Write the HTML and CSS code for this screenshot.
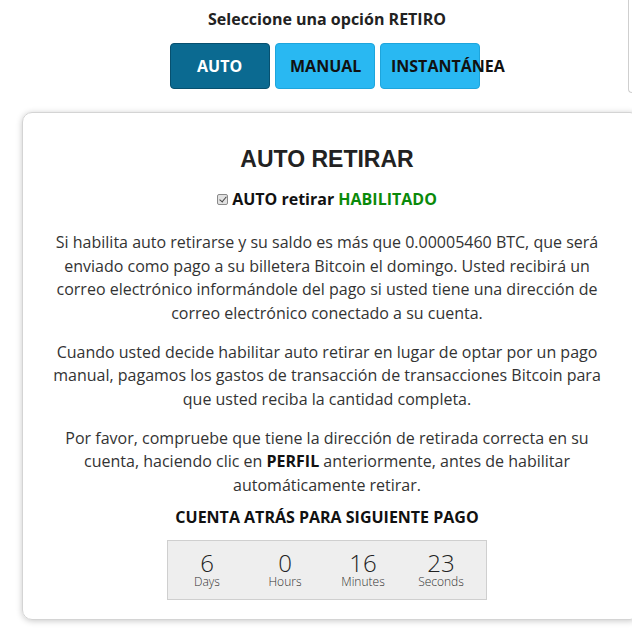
FILE: index.html
```html
<!DOCTYPE html>
<html lang="es">
<head>
<meta charset="utf-8">
<link rel="stylesheet" href="styles.css">
</head>
<body>
<div class="top">
  <div class="picker">
    <div class="picker-title">Seleccione una opción RETIRO</div>
    <div class="btns">
      <button class="btn btn-active">AUTO</button>
      <button class="btn">MANUAL</button>
      <button class="btn">INSTANTÁNEA</button>
    </div>
  </div>
  <div class="side"></div>
</div>
<div class="card">
  <h2 class="card-title">AUTO RETIRAR</h2>
  <div class="check-line">
    <input type="checkbox" class="chk" checked disabled>
    <span>AUTO retirar <span class="ok">HABILITADO</span></span>
  </div>
  <p class="txt">Si habilita auto retirarse y su saldo es más que 0.00005460 BTC, que será enviado como pago a su billetera Bitcoin el domingo. Usted recibirá un correo electrónico informándole del pago si usted tiene una dirección de correo electrónico conectado a su cuenta.</p>
  <p class="txt">Cuando usted decide habilitar auto retirar en lugar de optar por un pago manual, pagamos los gastos de transacción de transacciones Bitcoin para que usted reciba la cantidad completa.</p>
  <p class="txt">Por favor, compruebe que tiene la dirección de retirada correcta en su cuenta, haciendo clic en <b>PERFIL</b> anteriormente, antes de habilitar automáticamente retirar.</p>
  <div class="count-title">CUENTA ATRÁS PARA SIGUIENTE PAGO</div>
  <div class="count">
    <div class="cell"><span class="num">6</span><span class="lbl">Days</span></div>
    <div class="cell"><span class="num">0</span><span class="lbl">Hours</span></div>
    <div class="cell"><span class="num">16</span><span class="lbl">Minutes</span></div>
    <div class="cell"><span class="num">23</span><span class="lbl">Seconds</span></div>
  </div>
</div>
</body>
</html>
```
FILE: styles.css
```css
html, body {
  margin: 0;
  padding: 0;
  background: #fff;
  overflow: hidden;
}
body {
  font-family: "Open Sans", "Liberation Sans", sans-serif;
  color: #333;
  width: 632px;
  height: 636px;
}
.top {
  display: grid;
  grid-template-columns: 628px 40px;
  height: 112px;
}
.picker {
  padding-left: 26px;
  display: flex;
  flex-direction: column;
  align-items: center;
}
.picker-title {
  margin-top: 9px;
  font-size: 16px;
  line-height: 20px;
  font-weight: 700;
  color: #222;
}
.btns {
  margin-top: 14px;
  display: flex;
  gap: 5px;
  margin-left: -4px;
}
.btn {
  width: 100px;
  height: 46px;
  padding: 0;
  border: 1px solid #1ea5dc;
  border-radius: 4px;
  background: #29b8f2;
  color: #111;
  font-family: "Open Sans", sans-serif;
  font-weight: 700;
  font-size: 16px;
  white-space: nowrap;
  overflow: visible;
  text-align: left;
  padding-left: 10px;
}
.btn:nth-child(2) { padding-left: 14px; }
.btn-active {
  background: #0b6a91;
  border-color: #07506f;
  color: #fff;
  padding-left: 26px;
}
.side {
  height: 93px;
  border-left: 1px solid #cfcfcf;
  border-bottom: 1px solid #cfcfcf;
  border-bottom-left-radius: 4px;
  box-sizing: border-box;
}
.card {
  margin-left: 22px;
  width: 618px;
  height: 508px;
  box-sizing: border-box;
  border: 1px solid #d4d4d4;
  border-radius: 10px;
  box-shadow: 0 1px 6px rgba(0,0,0,0.22);
  padding: 33px 20px 0 12px;
  display: flex;
  flex-direction: column;
  align-items: center;
  text-align: center;
}
.card-title {
  margin: 0;
  font-family: "Liberation Sans", Arial, sans-serif;
  font-size: 23px;
  line-height: 26px;
  font-weight: 700;
  color: #222;
}
.check-line {
  margin-top: 16px;
  display: flex;
  align-items: center;
  gap: 4px;
  font-size: 16px;
  font-weight: 700;
  line-height: 22px;
  color: #111;
}
.chk {
  appearance: none;
  -webkit-appearance: none;
  position: relative;
  width: 11px;
  height: 11px;
  margin: 0;
  box-sizing: border-box;
  border: 1px solid #8a8a8a;
  border-radius: 2px;
  background: #e2e2e2;
}
.chk::after {
  content: "";
  position: absolute;
  left: 2.5px;
  top: 0px;
  width: 3px;
  height: 6px;
  border-right: 1.6px solid #444;
  border-bottom: 1.6px solid #444;
  transform: rotate(40deg);
}
.ok { color: #0a8a0a; }
.txt {
  margin: 21px 0 0;
  font-size: 16px;
  line-height: 23.5px;
  color: #333;
  width: 560px;
}
.txt + .txt { margin-top: 15.5px; }
.txt b { color: #111; }
.count-title {
  margin-top: 10px;
  font-size: 16px;
  line-height: 20px;
  font-weight: 700;
  color: #111;
}
.count {
  margin-top: 13px;
  width: 320px;
  height: 60px;
  box-sizing: border-box;
  border: 1px solid #cfcfcf;
  background: #eee;
  display: grid;
  grid-template-columns: repeat(4, 78px);
}
.cell {
  display: flex;
  flex-direction: column;
  align-items: center;
  padding-top: 11px;
}
.num {
  font-size: 24px;
  line-height: 22px;
  font-weight: 300;
  color: #222;
}
.lbl {
  font-size: 12px;
  line-height: 16px;
  font-weight: 300;
  color: #333;
}
```
